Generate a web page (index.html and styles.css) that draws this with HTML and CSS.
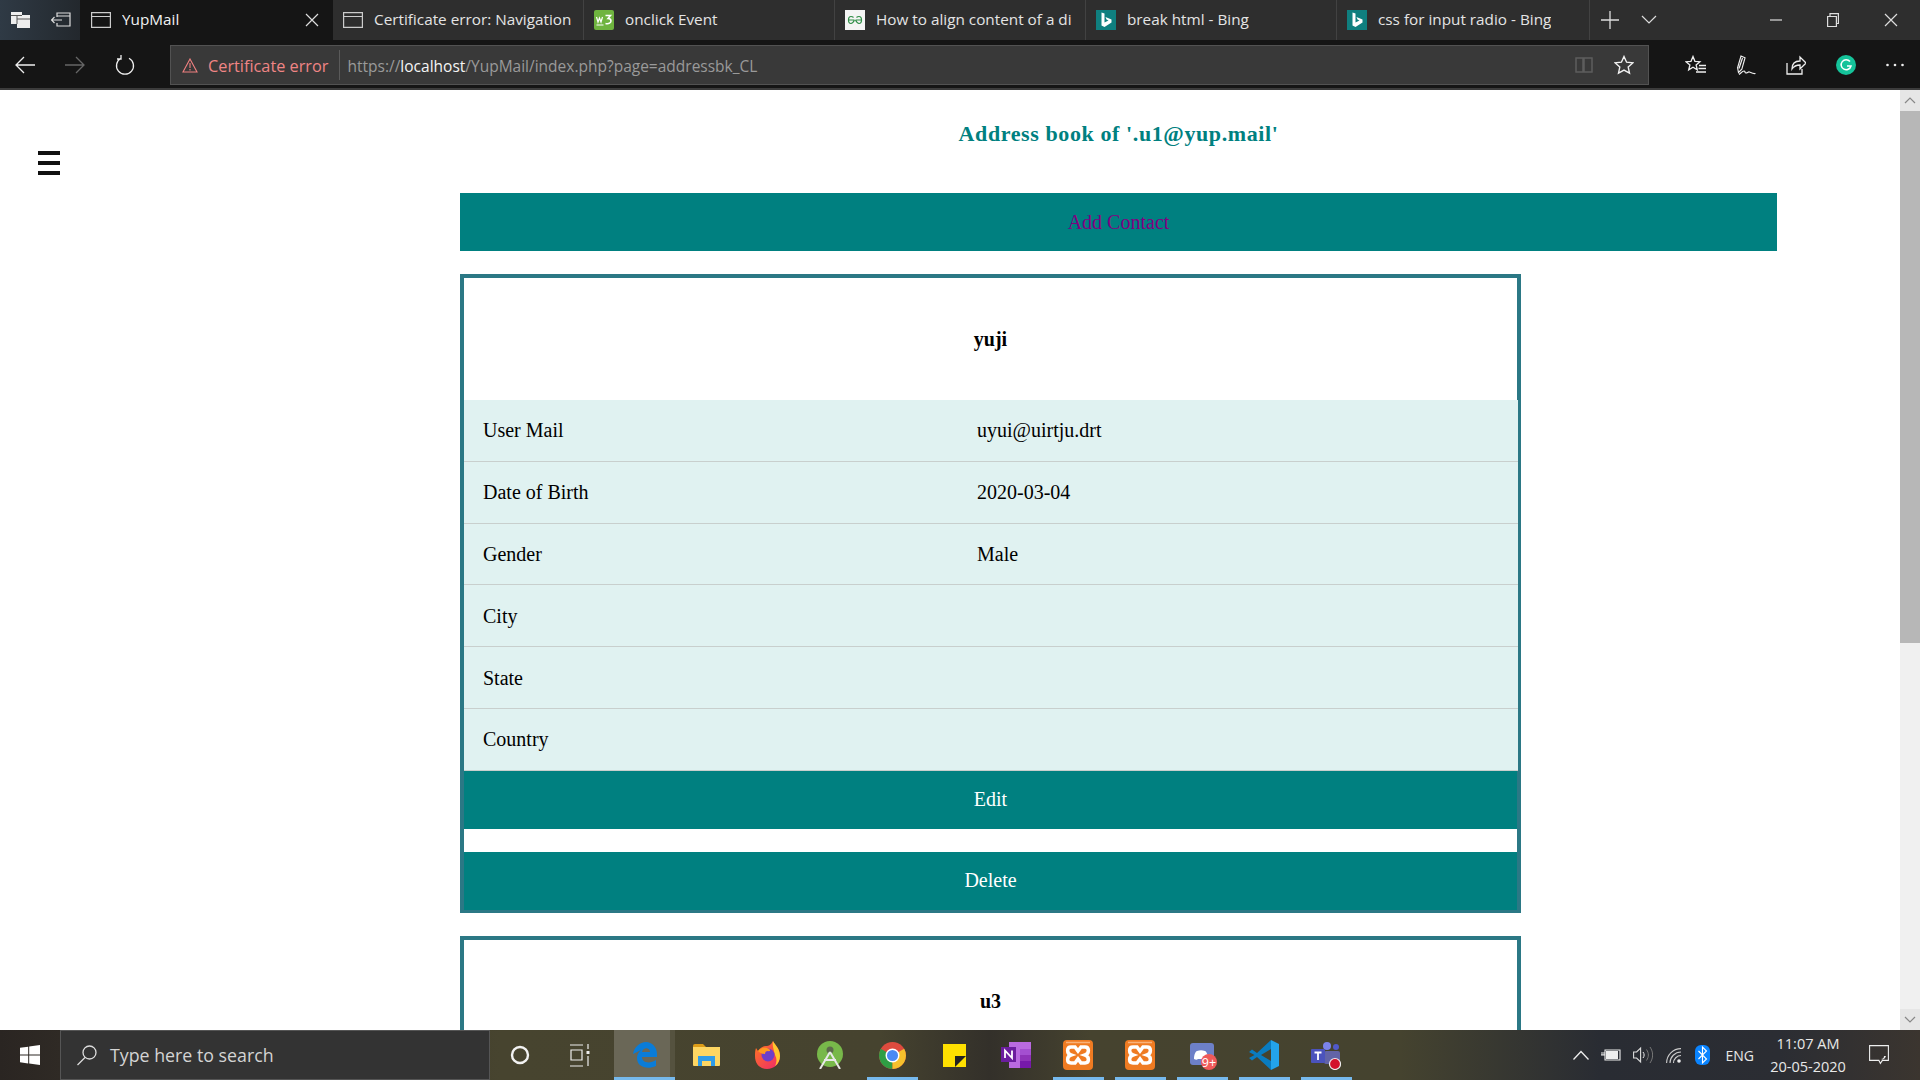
FILE: index.html
```html
<!DOCTYPE html>
<html lang="en">
	<head>
		<meta charset="utf-8">
		<title>YupMail</title>
		<link rel="stylesheet" href="styles.css">
	</head>
	<body>
		<!-- browser title bar -->
		<div class="tabbar">
			<div class="tabtools">
				<svg width="19" height="16" viewBox="0 0 19 16"><path d="M0 0h11v3h8v13H6v-4H0z" fill="#eee"/><path d="M0 3h11v1H0zM6 6.500h13v1H6z" fill="#555"/><path d="M5.500 4h1v8h-1z" fill="#555"/></svg>
				<svg width="20" height="16" viewBox="0 0 20 16" fill="none" stroke="#ddd" stroke-width="1.200"><path d="M6 5V1h13v13H6v-3M6 4h13M0 8h11M3.500 5L.5 8l3 3"/></svg>
			</div>
			<div class="tab active">
				<svg class="pageicon" width="20" height="16" viewBox="0 0 20 16"><path d="M.6.6h18.800v14.800H.6zM.6 4.500h18.800" fill="none" stroke="#ccc" stroke-width="1.200"/></svg>
				<span class="tabtext">YupMail</span>
				<svg class="tabclose" width="14" height="14" viewBox="0 0 14 14"><path d="M1 1l12 12M13 1L1 13" stroke="#ddd" stroke-width="1.200"/></svg>
			</div>
			<div class="tab">
				<svg class="pageicon" width="20" height="16" viewBox="0 0 20 16"><path d="M.6.6h18.800v14.800H.6zM.6 4.500h18.800" fill="none" stroke="#ccc" stroke-width="1.200"/></svg>
				<span class="tabtext">Certificate error: Navigation</span>
			</div>
			<div class="tab">
				<svg class="favicon" width="20" height="20" viewBox="0 0 20 20"><rect width="20" height="20" rx="2" fill="#6fb43f"/><path d="M2.500 7l1.500 5 1.500-4 1.500 4 1.500-5M2.500 15h7" fill="none" stroke="#fff" stroke-width="1.200"/><path d="M11.500 5.500h5l-2.500 3c2 0 3 1 3 2.500s-2 3.500-5.500 2.500" fill="none" stroke="#fff" stroke-width="1.500"/></svg>
				<span class="tabtext">onclick Event</span>
			</div>
			<div class="tab">
				<svg class="favicon" width="20" height="20" viewBox="0 0 20 20"><rect width="20" height="20" fill="#f4f4f4"/><path d="M9.500 10H3.500c0-3 1.500-3.500 2.500-3.500S8 7 8.500 7.500M3.500 10c0 2.500 1.500 3.500 2.500 3.500s2-.5 3.500-3.500M10.500 10h6c0-3-1.500-3.500-2.500-3.500S12 7 11.500 7.500M16.500 10c0 2.500-1.500 3.500-2.500 3.500s-2-.5-3.500-3.500" fill="none" stroke="#2f8d46" stroke-width="1.200"/></svg>
				<span class="tabtext clip">How to align content of a di</span>
			</div>
			<div class="tab">
				<svg class="favicon" width="20" height="20" viewBox="0 0 20 20"><rect width="20" height="20" fill="#0f7f7f"/><path d="M5.500 2.500l3 1v9l4-2-2-1-1-2.500 6 2.500v3l-7 4.500-3-1.500z" fill="#fff"/></svg>
				<span class="tabtext">break html - Bing</span>
			</div>
			<div class="tab last">
				<svg class="favicon" width="20" height="20" viewBox="0 0 20 20"><rect width="20" height="20" fill="#0f7f7f"/><path d="M5.500 2.500l3 1v9l4-2-2-1-1-2.500 6 2.500v3l-7 4.500-3-1.500z" fill="#fff"/></svg>
				<span class="tabtext">css for input radio - Bing</span>
			</div>
			<div class="tabactions">
				<svg width="18" height="18" viewBox="0 0 18 18"><path d="M9 0v18M0 9h18" stroke="#ddd" stroke-width="1.300"/></svg>
				<svg width="16" height="10" viewBox="0 0 16 10"><path d="M1 1l7 7 7-7" fill="none" stroke="#ddd" stroke-width="1.200"/></svg>
			</div>
			<div class="winbtns">
				<svg width="12" height="12" viewBox="0 0 12 12"><path d="M0 6h12" stroke="#ddd" stroke-width="1.200"/></svg>
				<svg width="12" height="14" viewBox="0 0 12 14"><path d="M.6 3.500h8.800v10H.6zM3 3.500V.6h8.400v9.900H9.400" fill="none" stroke="#ddd" stroke-width="1.200"/></svg>
				<svg width="14" height="14" viewBox="0 0 14 14"><path d="M1 1l12 12M13 1L1 13" stroke="#ddd" stroke-width="1.200"/></svg>
			</div>
		</div>

		<!-- address bar -->
		<div class="navbar">
			<div class="navbtns">
				<svg width="20" height="18" viewBox="0 0 20 18"><path d="M20 9H1M9 1L1 9l8 8" fill="none" stroke="#eee" stroke-width="1.300"/></svg>
				<svg width="20" height="18" viewBox="0 0 20 18"><path d="M0 9h19M11 1l8 8-8 8" fill="none" stroke="#666" stroke-width="1.300"/></svg>
				<svg width="20" height="20" viewBox="0 0 20 20"><path d="M6 3.200a8.500 8.500 0 1 0 8 0M6 0v4H2" fill="none" stroke="#eee" stroke-width="1.300"/></svg>
			</div>
			<div class="urlbox">
				<div class="certerror">
					<svg width="16" height="15" viewBox="0 0 16 15"><path d="M8 1l7 13H1zM8 5v5M8 11v1.500" fill="none" stroke="#f08080" stroke-width="1.100"/></svg>
					<span class="certtext">Certificate error</span>
				</div>
				<div class="url">https://<b>localhost</b>/YupMail/index.php?page=addressbk_CL</div>
				<svg class="urlicon" width="20" height="20" viewBox="0 0 20 20"><path d="M2 3l7 0v14H2zM9 3h1v14H9zM10 3h8v14h-8z" fill="none" stroke="#5d5d5d" stroke-width="1.500"/></svg>
				<svg class="urlicon" width="20" height="20" viewBox="0 0 20 20"><path d="M10 1.500l2.600 5.700 6.200.7-4.600 4.200 1.300 6.100-5.500-3.100-5.500 3.100 1.300-6.100L1.200 7.900l6.200-.7z" fill="none" stroke="#f2f2f2" stroke-width="1.400"/></svg>
			</div>
			<div class="navtools">
				<svg width="21" height="20" viewBox="0 0 21 20"><path d="M8 1.500l1.900 4.800 5 .4-3.800 3.200 1.200 4.900L8 12.200l-4.300 2.600 1.200-4.900L1 6.700l5-.4zM14 10.500h7M13.500 13.500H21M11 17h10" fill="none" stroke="#eee" stroke-width="1.300"/></svg>
				<svg width="20" height="20" viewBox="0 0 20 20"><path d="M5 1l4 1.800-3.200 11.500-3.300 3.200-.9-4.600zM6.500 3L3 13.500M3 19.500c1-.5 3.500-3.500 5-3.500 1.500 0 .5 2 2 2s2-1.500 3.500-1 3 2 6 1.500" fill="none" stroke="#eee" stroke-width="1.200"/></svg>
				<svg width="20" height="20" viewBox="0 0 20 20"><path d="M1 8v11h15v-5M6 14c0-5 3-8 8-8V2l6 6-6 6v-4c-4 0-6 1-8 4z" fill="none" stroke="#eee" stroke-width="1.300"/></svg>
				<svg width="20" height="20" viewBox="0 0 20 20"><circle cx="10" cy="10" r="10" fill="#15c39a"/><path d="M14 6.500A5 5 0 1 0 15 11h-4" fill="none" stroke="#fff" stroke-width="1.500"/></svg>
				<svg width="18" height="4" viewBox="0 0 18 4"><circle cx="1.500" cy="2" r="1.300" fill="#eee"/><circle cx="9" cy="2" r="1.300" fill="#eee"/><circle cx="16.500" cy="2" r="1.300" fill="#eee"/></svg>
			</div>
		</div>

		<!-- page -->
		<div class="viewport">
			<div class="sidecol">
				<div class="hamburger"><span></span><span></span><span></span></div>
			</div>
			<div class="content">
				<h2 class="booktitle">Address book of '.u1@yup.mail'</h2>
				<div class="addbar"><a href="#">Add Contact</a></div>

				<div class="card">
					<h3 class="cardname">yuji</h3>
					<div class="row"><div>User Mail</div><div>uyui@uirtju.drt</div></div>
					<div class="row"><div>Date of Birth</div><div>2020-03-04</div></div>
					<div class="row"><div>Gender</div><div>Male</div></div>
					<div class="row"><div>City</div><div></div></div>
					<div class="row"><div>State</div><div></div></div>
					<div class="row"><div>Country</div><div></div></div>
					<div class="cardbtn">Edit</div>
					<div class="cardbtn del">Delete</div>
				</div>

				<div class="card">
					<h3 class="cardname">u3</h3>
				</div>
			</div>
			<div class="scrollbar">
				<div class="scrollarrow"><svg width="12" height="7" viewBox="0 0 12 7"><path d="M1 6l5-5 5 5" fill="none" stroke="#888" stroke-width="1.200"/></svg></div>
				<div class="scrollthumb"></div>
				<div class="scrolltrack"></div>
				<div class="scrollarrow"><svg width="12" height="7" viewBox="0 0 12 7"><path d="M1 1l5 5 5-5" fill="none" stroke="#888" stroke-width="1.200"/></svg></div>
			</div>
		</div>

		<!-- windows taskbar -->
		<div class="taskbar">
			<div class="startbtn">
				<svg width="20" height="20" viewBox="0 0 20 20"><path d="M0 2.800l8.200-1.100v7.900H0zM9.200 1.500L20 0v9.600H9.200zM0 10.500h8.200v7.900L0 17.300zM9.200 10.500H20V20L9.200 18.500z" fill="#fff"/></svg>
			</div>
			<div class="searchbox">
				<svg width="22" height="22" viewBox="0 0 22 22"><circle cx="13.500" cy="8.500" r="6.500" fill="none" stroke="#ddd" stroke-width="1.300"/><path d="M9 13.500L1.500 21" stroke="#ddd" stroke-width="1.300"/></svg>
				<span>Type here to search</span>
			</div>
			<div class="taskbtn"><svg width="20" height="20" viewBox="0 0 20 20"><circle cx="10" cy="10" r="8" fill="none" stroke="#f2f2f2" stroke-width="2.400"/></svg></div>
			<div class="taskbtn taskview"><svg width="20" height="24" viewBox="0 0 20 24"><path d="M0 2h13M0 23h13M1 7h11v10H1zM18 1v5M18 13v10" fill="none" stroke="#eee" stroke-width="1.200"/><rect x="16.500" y="8" width="3" height="3" fill="#eee"/></svg></div>
			<div class="taskapp current">
				<svg width="24" height="26" viewBox="0 0 24 26"><path d="M0 12C1 5 7 0 13 0c6 0 11 5 11 12v3H9c0 6 8 7 14 3v6c-9 4-19 1-19-8 0-3 1-5 4-8-3 1-5 3-8 4zM9 10h8c0-5-7-5-8 0z" fill="#0a7cd8" fill-rule="evenodd"/></svg>
			</div>
			<div class="taskapp">
				<svg width="27" height="22" viewBox="0 0 27 22"><path d="M0 2q0-2 2-2h8l3 3H0z" fill="#dc9c18"/><path d="M0 3h27v18q0 1-1 1H1q-1 0-1-1z" fill="#fdd663"/><path d="M5 22V12h17v10h-4v-5H9v5z" fill="#2f9ce8"/></svg>
			</div>
			<div class="taskapp">
				<svg width="28" height="28" viewBox="0 0 28 28"><defs><linearGradient id="foxbody" x1="0" y1="0" x2="1" y2="1"><stop offset="0" stop-color="#ff7a1f"/><stop offset="1" stop-color="#f0266c"/></linearGradient></defs><path d="M2 7l2 3c2-3 5-5 8-5 3 0 5-1 7-5 1 3 7 7 7 15 0 8-6 13-13 13S1 23 1 15c0-3 0-5 1-8z" fill="url(#foxbody)"/><path d="M19 0c1 3 7 7 7 15 0 4-2 8-5 10 2-4 2-7 0-11-1-5-3-9-2-14z" fill="#ffc62d"/><circle cx="14" cy="14" r="6.500" fill="#6d3fc9"/><path d="M4 10c3-4 8-4 11-2 2 1 1 3-1 2-2 0-3 1-3 3-3 0-5-1-7-3z" fill="#ff9a1f"/></svg>
			</div>
			<div class="taskapp">
				<svg width="26" height="28" viewBox="0 0 26 28"><circle cx="13" cy="13" r="13" fill="#78b84a"/><circle cx="13" cy="9" r="3.500" fill="#5d6b4c"/><path d="M13 11L3 28M13 11l10 17M7 19h12" fill="none" stroke="#e8e8e8" stroke-width="2"/></svg>
			</div>
			<div class="taskapp open">
				<svg width="27" height="27" viewBox="0 0 28 28"><circle cx="14" cy="14" r="14" fill="#dd4b3e"/><path d="M14 14L1.900 7A14 14 0 0 0 14 28z" fill="#2f9e44"/><path d="M14 14l12.100-7A14 14 0 0 1 14 28z" fill="#f6c02c"/><circle cx="14" cy="14" r="6.500" fill="#4a8af4" stroke="#fff" stroke-width="1.500"/></svg>
			</div>
			<div class="taskapp">
				<svg width="23" height="23" viewBox="0 0 23 23"><rect width="23" height="23" fill="#ffe000"/><path d="M12 12h11L12 23z" fill="#222"/></svg>
			</div>
			<div class="taskapp">
				<svg width="30" height="26" viewBox="0 0 30 26"><rect x="8" width="22" height="26" fill="#b96ae0"/><rect x="19" y="7" width="11" height="6" fill="#a44fd0"/><rect x="19" y="13" width="11" height="6" fill="#8f33b8"/><rect x="19" y="19" width="11" height="7" fill="#7719aa"/><rect y="5" width="15" height="15" fill="#6b1d9e"/><path d="M4 16V8.500l7 7.500V8.500" fill="none" stroke="#fff" stroke-width="1.800"/></svg>
			</div>
			<div class="taskapp open">
				<svg width="30" height="30" viewBox="0 0 30 30"><rect width="30" height="30" rx="4" fill="#ef7b22"/><path d="M3 2.500h24" stroke="#f8b27a" stroke-width="1.500"/><path d="M8 7h4l3 4 3-4h4c4.500 0 4.500 6.500 0 8 4.500 1.500 4.500 8 0 8h-4l-3-4-3 4H8c-4.500 0-4.500-6.500 0-8-4.500-1.500-4.500-8 0-8z" fill="none" stroke="#fff" stroke-width="3.500"/></svg>
			</div>
			<div class="taskapp open">
				<svg width="30" height="30" viewBox="0 0 30 30"><rect width="30" height="30" rx="4" fill="#ef7b22"/><path d="M3 2.500h24" stroke="#f8b27a" stroke-width="1.500"/><path d="M8 7h4l3 4 3-4h4c4.500 0 4.500 6.500 0 8 4.500 1.500 4.500 8 0 8h-4l-3-4-3 4H8c-4.500 0-4.500-6.500 0-8-4.500-1.500-4.500-8 0-8z" fill="none" stroke="#fff" stroke-width="3.500"/></svg>
			</div>
			<div class="taskapp open">
				<svg width="30" height="30" viewBox="0 0 30 30"><rect x="3" y="3" width="24" height="22" rx="3" fill="#6d80c8"/><path d="M7 19c0-5 2-8 3-8 3-1 5-1 8 0 1 0 3 3 3 8-2 1-3 1-4 0h-6c-1 1-2 1-4 0z" fill="#fff"/><circle cx="22" cy="22" r="8" fill="#ef5a5a"/><text class="badge" x="22" y="26.500" text-anchor="middle">9+</text></svg>
			</div>
			<div class="taskapp open">
				<svg width="30" height="30" viewBox="0 0 30 30"><path d="M22 0L8 13 3 9.500 0 12l5.500 3L0 18l3 2.500L8 17l14 13V21l-10-6 10-6z" fill="#0a7cc0"/><path d="M22 0l8 4v22l-8 4z" fill="#23a3ea"/></svg>
			</div>
			<div class="taskapp open">
				<svg width="30" height="30" viewBox="0 0 30 30"><circle cx="16" cy="6" r="4" fill="#7b83eb"/><circle cx="25" cy="7" r="3" fill="#5059c9"/><rect x="13" y="11" width="16" height="13" rx="2" fill="#6264a7"/><rect y="9" width="14" height="14" rx="1" fill="#4b53bc"/><path d="M3.500 12.500h7M7 12.500v7.500" stroke="#fff" stroke-width="1.800"/><circle cx="24" cy="24" r="5.500" fill="#d3122a" stroke="#eee" stroke-width="1.200"/></svg>
			</div>
			<div class="tray">
				<svg width="16" height="10" viewBox="0 0 16 10"><path d="M.5 9.500L8 1.500l7.500 8" fill="none" stroke="#eee" stroke-width="1.300"/></svg>
				<svg width="20" height="12" viewBox="0 0 20 12"><path d="M4 1h15v10H4z" fill="none" stroke="#eee" stroke-width="1.100"/><rect x="5" y="2" width="12" height="8" fill="#eee"/><path d="M0 6h4M1 3v3M3 3v3" stroke="#eee"/></svg>
				<svg width="20" height="18" viewBox="0 0 20 18"><path d="M.6 6h3l4-4v14l-4-4h-3z" fill="none" stroke="#ddd" stroke-width="1.100"/><path d="M10 6c1.500 2 1.500 4 0 6" fill="none" stroke="#eee"/><path d="M13.500 3.500c2.500 4 2.500 7 0 11M17 1c3.500 5 3.500 11 0 16" fill="none" stroke="#777"/></svg>
				<svg class="traywifi" width="15" height="15" viewBox="0 0 15 15"><path d="M.6 15C.6 7 7 .6 15 .6M4 15C4 9 9 4 15 4M7.500 15c0-4 3.500-7.500 7.500-7.500" fill="none" stroke="#ccc" stroke-width="1.100"/><circle cx="13" cy="13" r="1.800" fill="#eee"/></svg>
				<svg class="traybt" width="15" height="20" viewBox="0 0 15 20"><rect width="15" height="20" rx="6" fill="#0a84ff"/><path d="M3.500 6l8 8-4 4V2l4 4-8 8" fill="none" stroke="#fff" stroke-width="1.100"/></svg>
				<span class="lang">ENG</span>
				<div class="clock"><div>11:07 AM</div><div>20-05-2020</div></div>
				<svg width="20" height="20" viewBox="0 0 20 20"><path d="M.6.6h18.800v14.800h-6l-2 3-1.500-3H.6z" fill="none" stroke="#eee" stroke-width="1.100"/><path d="M17 11c-1 3-3 4-5 3 2 0 3-1 3-3z" fill="#eee"/></svg>
			</div>
		</div>
	</body>
</html>
```

FILE: styles.css
```css
* {
	box-sizing: border-box;
}

html, body {
	margin: 0;
	height: 1080px;
	overflow: hidden;
}

body {
	display: flex;
	flex-direction: column;
	font-family: "Liberation Serif", serif;
	background: #fff;
}

svg {
	display: block;
	flex: none;
}

/* tab strip */
.tabbar {
	display: flex;
	height: 40px;
	flex: none;
	background: #2e2e2e;
	font-family: "Open Sans", sans-serif;
	font-size: 15.300px;
	color: #e4e4e4;
}

.tabtools {
	display: flex;
	align-items: center;
	gap: 21px;
	width: 80px;
	padding-left: 11px;
	background: linear-gradient(90deg, #2f3a45, #23282d);
}

.tab {
	display: flex;
	align-items: center;
	width: 251px;
	padding-left: 10px;
	border-right: 1px solid #424242;
	background: #2e2e2e;
}

.tab.active {
	width: 253px;
	padding-left: 11px;
	background: #151515;
	border-right: 0;
	color: #f2f2f2;
}

.tab.last {
	width: 253px;
}

.tabtext {
	margin: 0 0 2px 11px;
	white-space: nowrap;
	overflow: hidden;
}

.tab .clip {
	width: 198px;
}

.tabclose {
	margin-left: auto;
	margin-right: 14px;
}

.tabactions {
	display: flex;
	align-items: center;
	gap: 22px;
	padding-left: 11px;
}

.winbtns {
	display: flex;
	align-items: center;
	gap: 45px;
	margin-left: auto;
	padding-right: 22px;
}

/* address bar */
.navbar {
	display: flex;
	align-items: center;
	height: 50px;
	flex: none;
	background: #151515;
	border-bottom: 2px solid #3c3c3c;
	padding: 5px 0 3px;
}

.navbtns {
	display: flex;
	align-items: center;
	gap: 30px;
	width: 170px;
	padding-left: 15px;
}

.urlbox {
	display: flex;
	align-items: center;
	width: 1479px;
	height: 40px;
	background: #393939;
	border: 1px solid #525252;
	font-family: "Open Sans", sans-serif;
	padding-right: 14px;
}

.certerror {
	display: flex;
	align-items: center;
	gap: 10px;
	height: 30px;
	padding: 0 11px;
	border-right: 1px solid #5a5a5a;
	font-size: 16.300px;
	color: #f08585;
	white-space: nowrap;
}

.certtext {
	margin-top: 2px;
}

.url {
	flex: 1;
	padding: 2px 0 0 7px;
	font-size: 15.500px;
	color: #9a9a9a;
}

.url b {
	font-weight: 400;
	color: #f5f5f5;
}

.urlicon + .urlicon {
	margin-left: 20px;
}

.navtools {
	display: flex;
	align-items: center;
	justify-content: space-between;
	flex: 1;
	padding: 0 16px 0 36px;
}

/* page area */
.viewport {
	display: flex;
	flex: 1;
	min-height: 0;
	overflow: hidden;
}

.sidecol {
	width: 460px;
	flex: none;
	padding: 61px 0 0 38px;
}

.hamburger {
	display: flex;
	flex-direction: column;
	gap: 6px;
	width: 22px;
}

.hamburger span {
	height: 4px;
	background: #111;
}

.content {
	width: 1317px;
	flex: none;
}

.booktitle {
	margin: 0;
	height: 103px;
	padding-top: 31px;
	text-align: center;
	font-size: 22px;
	line-height: 26px;
	color: #008080;
	letter-spacing: 0.6px;
}

.addbar {
	display: flex;
	align-items: center;
	justify-content: center;
	height: 58px;
	background: #008080;
	font-size: 20px;
}

.addbar a {
	color: #800080;
	text-decoration: none;
}

.card {
	width: 1061px;
	margin-top: 23px;
	border: 4px solid #2b7885;
	border-bottom-width: 3px;
}

.cardname {
	margin: 0;
	height: 122px;
	padding-top: 1px;
	display: flex;
	align-items: center;
	justify-content: center;
	font-size: 20px;
}

.row {
	display: grid;
	grid-template-columns: 494px 1fr;
	align-items: center;
	height: 61.800px;
	margin-right: -1px;
	padding: 1px 0 0 19px;
	background: #e0f2f1;
	border-bottom: 1px solid #c8cfcd;
	font-size: 20px;
}

.cardbtn {
	display: flex;
	align-items: center;
	justify-content: center;
	height: 58px;
	background: #008080;
	color: #fff;
	font-size: 20px;
}

.cardbtn.del {
	margin-top: 23px;
}

/* scrollbar */
.scrollbar {
	display: flex;
	flex-direction: column;
	width: 20px;
	margin-left: auto;
	background: #f0f0f0;
}

.scrollarrow {
	display: flex;
	align-items: center;
	justify-content: center;
	height: 21px;
	background: #e6e6e6;
}

.scrollthumb {
	height: 532px;
	background: #b7b7b7;
}

.scrolltrack {
	flex: 1;
}

/* taskbar */
.taskbar {
	display: flex;
	align-items: stretch;
	height: 50px;
	flex: none;
	background: linear-gradient(90deg, #2a2522 0, #2f2a25 60px, #47442f 500px, #46432f 880px, #33302a 990px, #46432f 1090px, #45432f 1400px, #292c33 1600px, #2b2d33 1780px, #3b352f 1920px);
}

.startbtn {
	display: flex;
	align-items: center;
	justify-content: center;
	width: 60px;
}

.searchbox {
	display: flex;
	align-items: center;
	gap: 12px;
	width: 430px;
	padding-left: 15px;
	background: #333;
	border: 1px solid #555;
	font-family: "Open Sans", sans-serif;
	font-size: 17.800px;
	color: #d4d4d4;
}

.taskbtn {
	display: flex;
	align-items: center;
	justify-content: center;
	width: 62px;
	padding-right: 2px;
}

.taskbtn.taskview {
	padding-right: 6px;
}

.taskapp {
	display: flex;
	align-items: center;
	justify-content: center;
	width: 62px;
}

.taskapp.current {
	width: 61px;
	background: linear-gradient(#76b9ed, #76b9ed) no-repeat bottom / 100% 3px, linear-gradient(90deg, #6a6757 56px, #55523f 56px);
}

.taskapp.open {
	background: linear-gradient(#76b9ed, #76b9ed) no-repeat center bottom / 51px 3px;
}

.badge {
	font-family: "Open Sans", sans-serif;
	font-size: 12.500px;
	fill: #fff;
}

.tray {
	display: flex;
	align-items: center;
	margin-left: auto;
	padding-right: 31px;
	font-family: "Open Sans", sans-serif;
	color: #e8e8e8;
}

.tray svg {
	margin-right: 12px;
}

.tray .traywifi {
	margin-left: 1px;
}

.tray .traybt {
	margin-left: 2px;
}

.tray svg:last-child {
	margin-right: 0;
}

.lang {
	font-size: 14px;
	margin-left: 4px;
}

.clock {
	width: 76px;
	margin: 0 23px 0 16px;
	font-size: 14.500px;
	line-height: 23px;
	text-align: center;
	white-space: nowrap;
}
```
